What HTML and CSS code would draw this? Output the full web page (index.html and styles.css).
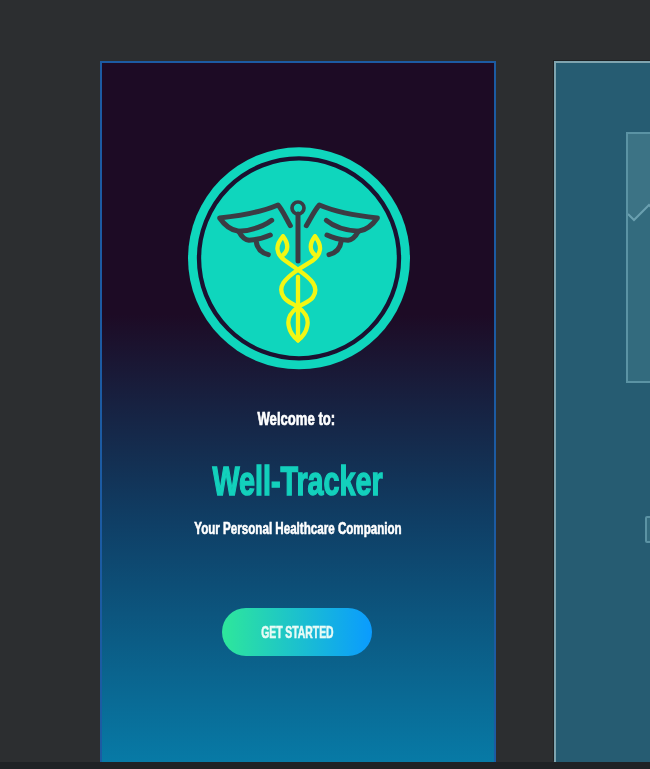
FILE: index.html
```html
<!DOCTYPE html>
<html lang="en">
<head>
<meta charset="utf-8">
<title>Well-Tracker</title>
<link rel="stylesheet" href="styles.css">
</head>
<body>
<main class="canvas">
  <section class="frame welcome">
    <svg class="logo" viewBox="55 50 666 668" aria-hidden="true">
      <circle cx="388" cy="384" r="333" class="disc"/>
      <circle cx="388" cy="384" r="300" class="ring"/>
      <g class="wings">
        <path d="M362 286C348 262 338 238 325 224C280 243 215 256 150 263C165 285 185 300 207 303C245 300 280 290 306 270"/>
        <path d="M207 303C215 318 225 328 238 330C262 328 283 323 302 314"/>
        <path d="M260 335C262 352 270 366 296 373"/>
        <path d="M410 286C424 262 436 238 449 224C494 243 558 256 623 263C608 285 588 300 566 303C528 300 494 290 470 270"/>
        <path d="M566 303C558 318 548 328 535 330C511 328 490 323 472 314"/>
        <path d="M514 335C512 352 504 366 478 373"/>
        <circle class="knob" cx="385" cy="233" r="18"/>
        <path d="M385 251V392"/>
      </g>
      <g class="snakes">
        <path d="M385 440V625"/>
        <path d="M340 318C316 345 318 370 345 390L385 418C425 445 450 470 430 500C420 515 400 520 385 530C365 545 350 562 358 590C362 610 375 622 385 630"/>
        <path d="M436 318C458 345 456 370 430 390L385 418C345 445 322 470 342 500C352 515 370 520 385 530C405 545 420 562 412 590C408 610 395 622 385 630"/>
        <path d="M340 318C358 340 356 362 340 374"/>
        <path d="M436 318C418 340 420 362 436 374"/>
      </g>
    </svg>
    <p class="greeting">Welcome to:</p>
    <h1 class="title">Well-Tracker</h1>
    <p class="tagline">Your Personal Healthcare Companion</p>
    <button class="cta" type="button"><span class="cta-label">GET STARTED</span></button>
  </section>
  <section class="frame ghost">
    <div class="chart">
      <svg class="chart-line" viewBox="0 0 24 90" preserveAspectRatio="none" aria-hidden="true">
        <path class="chart-area" d="M0 0H24V72L21 71L6 86L0 80Z"/>
        <path class="chart-stroke" d="M0 80L6 86L21 71L24 74"/>
      </svg>
    </div>
    <div class="chip"></div>
  </section>
</main>
</body>
</html>
```

FILE: styles.css
```css
* { box-sizing: border-box; }
html, body { margin: 0; height: 100%; overflow: hidden; background: #1f2225; }
.canvas {
  display: flex;
  gap: 58px;
  height: 762px;
  padding: 61px 0 0 100px;
  background: #2c2e30;
  overflow: hidden;
  filter: blur(0.45px);
}
.frame { flex: none; width: 396px; height: 701px; }
.welcome {
  display: flex;
  flex-direction: column;
  align-items: center;
  border: 2px solid #1c5ba3;
  border-bottom: 0;
  background: linear-gradient(180deg, #1d0b25 0, #1d0b25 36%, #0f3f66 66%, #077aa6 100%);
  font-family: "Liberation Sans", sans-serif;
  font-weight: 700;
  color: #fff;
  text-align: center;
}
.logo { display: block; width: 222px; height: 222.7px; margin: 84px 0 0 1px; }
.disc { fill: #0fd6bd; }
.ring { fill: none; stroke: #1b1030; stroke-width: 13; }
.wings path, .wings circle { fill: none; stroke: #3b3c44; stroke-width: 15; stroke-linejoin: round; stroke-linecap: round; }
.wings .knob { stroke-width: 11; }
.snakes path { fill: none; stroke: #f2f714; stroke-width: 13; stroke-linejoin: round; stroke-linecap: round; }
.greeting {
  margin: 39px 0 0 -4px;
  font-size: 19px;
  line-height: 20px;
  white-space: nowrap;
  transform: scaleX(0.69);
  -webkit-text-stroke: 0.7px #fff;
}
.title {
  margin: 30px 0 0;
  font-size: 41px;
  line-height: 44px;
  white-space: nowrap;
  color: #13d0bc;
  transform: scaleX(0.7);
  -webkit-text-stroke: 1.5px #13d0bc;
}
.tagline {
  margin: 17px 0 0;
  font-size: 16px;
  line-height: 18px;
  white-space: nowrap;
  transform: scaleX(0.725);
  -webkit-text-stroke: 0.6px #fff;
}
.cta {
  width: 150px;
  height: 48px;
  margin: 70px 0 0 -2px;
  padding: 3px 0 0;
  border: 0;
  border-radius: 24px;
  background: linear-gradient(90deg, #2ee79b 0, #0a9bff 100%);
  color: #e8fbf6;
  font: 700 17px "Liberation Sans", sans-serif;
  white-space: nowrap;
}
.cta-label {
  display: inline-block;
  transform: scaleX(0.61);
  -webkit-text-stroke: 0.6px #e8fbf6;
}
.ghost {
  display: flex;
  flex-direction: column;
  align-items: flex-start;
  padding: 69px 0 0 70px;
  border-top: 2px solid #7fa4af;
  border-left: 2px solid #7fa4af;
  background: #265c72;
  box-shadow: -1px -1px 0 #1c2023;
}
.chart {
  width: 300px;
  height: 251px;
  border: 2px solid #5b93a4;
  background: #336b7e;
}
.chart-line { display: block; width: 24px; height: 90px; }
.chart-area { fill: #3c7385; }
.chart-stroke { fill: none; stroke: #6ba0b0; stroke-width: 2; vector-effect: non-scaling-stroke; }
.chip {
  width: 40px;
  height: 27px;
  margin: 133px 0 0 19px;
  border: 2px solid #5b93a4;
  border-radius: 2px;
  background: #336b7e;
}
```
